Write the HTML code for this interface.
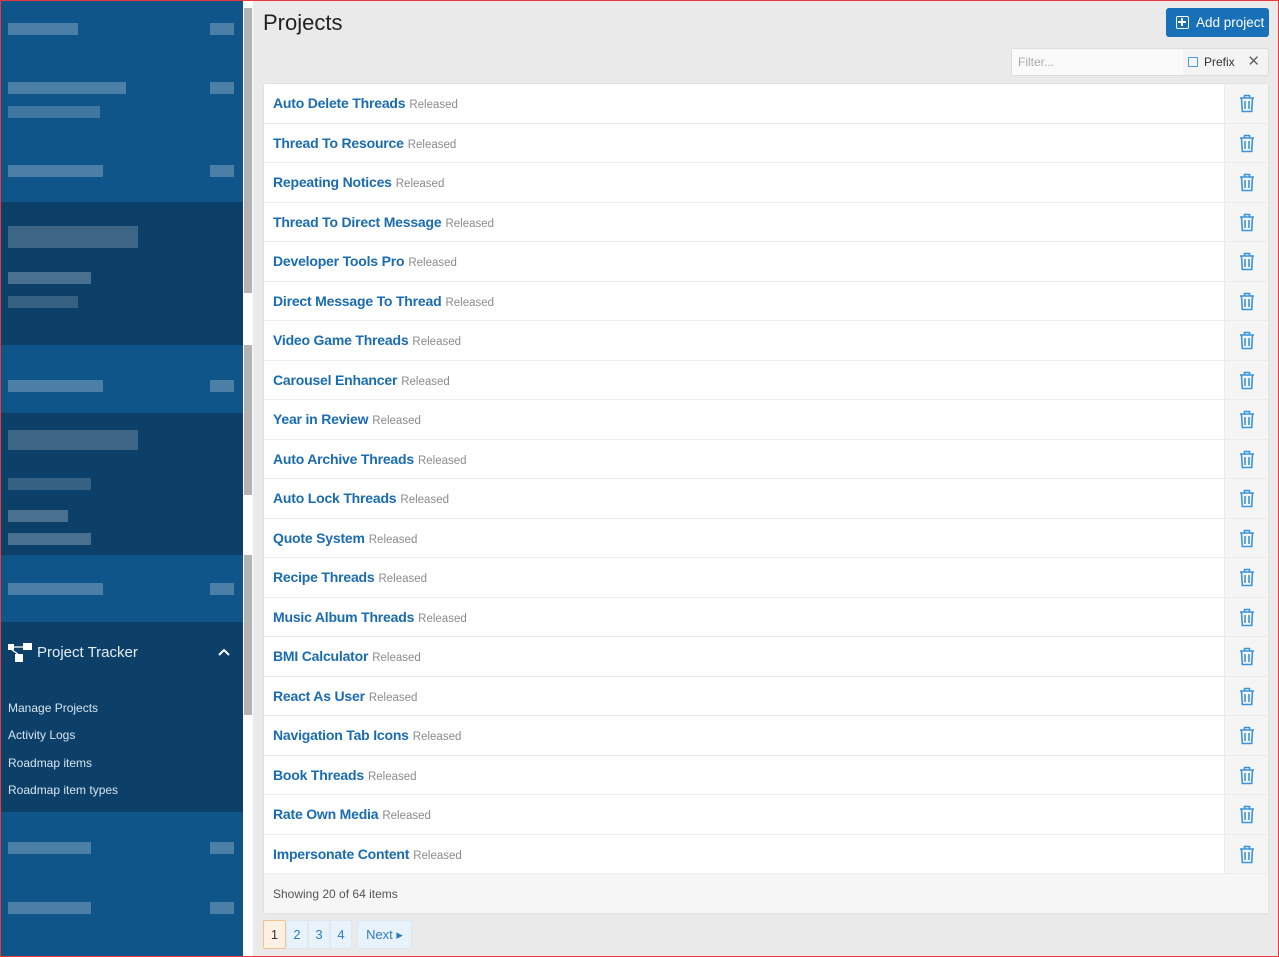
<!DOCTYPE html>
<html><head><meta charset="utf-8"><style>
*{box-sizing:border-box;margin:0;padding:0}
body{width:1279px;height:957px;overflow:hidden;background:#eaeaea;font-family:"Liberation Sans",sans-serif;position:relative}
.frame{position:absolute;inset:0;border:1px solid #e8383d;pointer-events:none;z-index:9}
.sb{position:absolute;left:0;top:0;width:243px;height:957px;background:#0f5589}
.sec{position:absolute;left:0;width:243px}
.dk{background:#0d4068}
.lt{background:#0f5589}
.px{position:absolute;height:12px;background:rgba(255,255,255,.25)}
.scroll{position:absolute;left:243px;top:0;width:10px;height:957px;background:#fdfdfd}
.th{position:absolute;left:1px;width:8px;background:#b3b3b3}
.nav{position:absolute;left:8px;color:#d6e4f0;font-size:12px}
h1{position:absolute;left:263px;top:10px;font-weight:normal;font-size:22px;color:#222}
.add{position:absolute;left:1166px;top:8px;width:103px;height:29px;background:#1770b8;border-radius:3px;color:#fff;font-size:13.5px;line-height:29px;padding-left:30px}
.add i{position:absolute;left:10px;top:8px;width:13px;height:13px;border:1.5px solid #fff;border-radius:2px}
.add i:before{content:"";position:absolute;left:4px;top:1px;width:1.5px;height:8px;background:#fff}
.add i:after{content:"";position:absolute;left:1px;top:4px;width:8px;height:1.5px;background:#fff}
.filter{position:absolute;left:1011px;top:48px;width:258px;height:28px;border:1px solid #ddd;border-radius:3px;background:#f4f4f4}
.filter .in{position:absolute;left:0;top:0;width:171px;height:26px;background:#fafafa;color:#aaa;font-size:12px;line-height:26px;padding-left:6px}
.filter .pf{position:absolute;left:176px;top:0;font-size:12px;line-height:26px;color:#333}
.filter .pf b{display:inline-block;width:10px;height:10px;border:1.5px solid #4a9de0;margin-right:6px;vertical-align:-1px}
.filter .x{position:absolute;right:8px;top:0;line-height:26px;color:#666;font-size:15px}
.list{position:absolute;left:263px;top:83px;width:1006px;background:#fff;border:1px solid #e2e2e2;border-radius:3px}
.row{height:39.5px;border-bottom:1px solid #ececec;position:relative}
.row .n{position:absolute;left:9px;top:11px;font-size:14px;font-weight:bold;color:#1a6cb0;letter-spacing:-.2px;white-space:nowrap}
.row .n span{font-weight:normal;font-size:11.5px;color:#8b8b8b;letter-spacing:0;margin-left:4px}
.row .t{position:absolute;right:0;top:0;width:44px;height:100%;background:#f5f5f5;border-left:1px solid #ececec}
.row svg{position:absolute;left:14px;top:10px}
.foot{height:39px;background:#f6f6f6;font-size:12px;color:#555;padding:13px 9px}
.pg{position:absolute;top:920px;height:29px;border:1px solid #dfe8f0;background:#e8f2fb;color:#2f7cc0;font-size:13px;line-height:27px;text-align:center;border-radius:2px}
</style></head><body>
<div class="sb">
<div class="sec lt" style="top:0;height:202px"></div>
<div class="sec dk" style="top:202px;height:143px"></div>
<div class="sec lt" style="top:345px;height:68px"></div>
<div class="sec dk" style="top:413px;height:142px"></div>
<div class="sec lt" style="top:555px;height:67px"></div>
<div class="sec dk" style="top:622px;height:190px"></div>
<div class="sec lt" style="top:812px;height:145px"></div>
<div class="px" style="left:8px;top:23px;width:70px"></div><div class="px" style="left:210px;top:23px;width:24px"></div>
<div class="px" style="left:8px;top:82px;width:118px"></div><div class="px" style="left:8px;top:106px;width:92px;opacity:.8"></div><div class="px" style="left:210px;top:82px;width:24px"></div>
<div class="px" style="left:8px;top:165px;width:95px"></div><div class="px" style="left:210px;top:165px;width:24px"></div>
<div class="px" style="left:8px;top:226px;width:130px;height:22px;opacity:.8"></div>
<div class="px" style="left:8px;top:272px;width:83px"></div><div class="px" style="left:8px;top:296px;width:70px;opacity:.7"></div>
<div class="px" style="left:8px;top:380px;width:95px"></div><div class="px" style="left:210px;top:380px;width:24px"></div>
<div class="px" style="left:8px;top:430px;width:130px;height:20px;opacity:.8"></div><div class="px" style="left:8px;top:478px;width:83px;opacity:.7"></div><div class="px" style="left:8px;top:510px;width:60px"></div><div class="px" style="left:8px;top:533px;width:83px"></div>
<div class="px" style="left:8px;top:583px;width:95px"></div><div class="px" style="left:210px;top:583px;width:24px"></div>
<div class="px" style="left:8px;top:842px;width:83px"></div><div class="px" style="left:210px;top:842px;width:24px"></div>
<div class="px" style="left:8px;top:902px;width:83px"></div><div class="px" style="left:210px;top:902px;width:24px"></div>
<svg style="position:absolute;left:8px;top:643px" width="25" height="20"><rect x="0" y="1" width="6" height="6" fill="#fff"/><rect x="15" y="0" width="9" height="7" fill="#fff"/><rect x="7" y="11" width="8" height="8" fill="#fff"/><path d="M6 4H15M4 7L10 11" stroke="#fff" stroke-width="1.3"/></svg>
<div style="position:absolute;left:37px;top:644px;color:#e3edf5;font-size:15px">Project Tracker</div>
<svg style="position:absolute;left:218px;top:648px" width="12" height="9"><path d="M1 7L6 2L11 7" stroke="#fff" stroke-width="2" fill="none"/></svg>
<div class="nav" style="top:701px">Manage Projects</div>
<div class="nav" style="top:728px">Activity Logs</div>
<div class="nav" style="top:756px">Roadmap items</div>
<div class="nav" style="top:783px">Roadmap item types</div>
</div>
<div class="scroll"><div class="th" style="top:8px;height:285px"></div><div class="th" style="top:345px;height:150px"></div><div class="th" style="top:555px;height:160px"></div></div>
<h1>Projects</h1>
<div class="add"><i></i>Add project</div>
<div class="filter"><div class="in">Filter...</div><div class="pf"><b></b>Prefix</div><div class="x">✕</div></div>
<div class="list">
<div class="row"><div class="n">Auto Delete Threads<span>Released</span></div><div class="t"><svg width="16" height="19" viewBox="0 0 16 19" fill="none" stroke="#3a93dd" stroke-width="1.6"><path d="M1 4H15M5.5 4V1.5H10.5V4M2.5 4L3.3 17.5H12.7L13.5 4M6 7V15M10 7V15"/></svg></div></div>
<div class="row"><div class="n">Thread To Resource<span>Released</span></div><div class="t"><svg width="16" height="19" viewBox="0 0 16 19" fill="none" stroke="#3a93dd" stroke-width="1.6"><path d="M1 4H15M5.5 4V1.5H10.5V4M2.5 4L3.3 17.5H12.7L13.5 4M6 7V15M10 7V15"/></svg></div></div>
<div class="row"><div class="n">Repeating Notices<span>Released</span></div><div class="t"><svg width="16" height="19" viewBox="0 0 16 19" fill="none" stroke="#3a93dd" stroke-width="1.6"><path d="M1 4H15M5.5 4V1.5H10.5V4M2.5 4L3.3 17.5H12.7L13.5 4M6 7V15M10 7V15"/></svg></div></div>
<div class="row"><div class="n">Thread To Direct Message<span>Released</span></div><div class="t"><svg width="16" height="19" viewBox="0 0 16 19" fill="none" stroke="#3a93dd" stroke-width="1.6"><path d="M1 4H15M5.5 4V1.5H10.5V4M2.5 4L3.3 17.5H12.7L13.5 4M6 7V15M10 7V15"/></svg></div></div>
<div class="row"><div class="n">Developer Tools Pro<span>Released</span></div><div class="t"><svg width="16" height="19" viewBox="0 0 16 19" fill="none" stroke="#3a93dd" stroke-width="1.6"><path d="M1 4H15M5.5 4V1.5H10.5V4M2.5 4L3.3 17.5H12.7L13.5 4M6 7V15M10 7V15"/></svg></div></div>
<div class="row"><div class="n">Direct Message To Thread<span>Released</span></div><div class="t"><svg width="16" height="19" viewBox="0 0 16 19" fill="none" stroke="#3a93dd" stroke-width="1.6"><path d="M1 4H15M5.5 4V1.5H10.5V4M2.5 4L3.3 17.5H12.7L13.5 4M6 7V15M10 7V15"/></svg></div></div>
<div class="row"><div class="n">Video Game Threads<span>Released</span></div><div class="t"><svg width="16" height="19" viewBox="0 0 16 19" fill="none" stroke="#3a93dd" stroke-width="1.6"><path d="M1 4H15M5.5 4V1.5H10.5V4M2.5 4L3.3 17.5H12.7L13.5 4M6 7V15M10 7V15"/></svg></div></div>
<div class="row"><div class="n">Carousel Enhancer<span>Released</span></div><div class="t"><svg width="16" height="19" viewBox="0 0 16 19" fill="none" stroke="#3a93dd" stroke-width="1.6"><path d="M1 4H15M5.5 4V1.5H10.5V4M2.5 4L3.3 17.5H12.7L13.5 4M6 7V15M10 7V15"/></svg></div></div>
<div class="row"><div class="n">Year in Review<span>Released</span></div><div class="t"><svg width="16" height="19" viewBox="0 0 16 19" fill="none" stroke="#3a93dd" stroke-width="1.6"><path d="M1 4H15M5.5 4V1.5H10.5V4M2.5 4L3.3 17.5H12.7L13.5 4M6 7V15M10 7V15"/></svg></div></div>
<div class="row"><div class="n">Auto Archive Threads<span>Released</span></div><div class="t"><svg width="16" height="19" viewBox="0 0 16 19" fill="none" stroke="#3a93dd" stroke-width="1.6"><path d="M1 4H15M5.5 4V1.5H10.5V4M2.5 4L3.3 17.5H12.7L13.5 4M6 7V15M10 7V15"/></svg></div></div>
<div class="row"><div class="n">Auto Lock Threads<span>Released</span></div><div class="t"><svg width="16" height="19" viewBox="0 0 16 19" fill="none" stroke="#3a93dd" stroke-width="1.6"><path d="M1 4H15M5.5 4V1.5H10.5V4M2.5 4L3.3 17.5H12.7L13.5 4M6 7V15M10 7V15"/></svg></div></div>
<div class="row"><div class="n">Quote System<span>Released</span></div><div class="t"><svg width="16" height="19" viewBox="0 0 16 19" fill="none" stroke="#3a93dd" stroke-width="1.6"><path d="M1 4H15M5.5 4V1.5H10.5V4M2.5 4L3.3 17.5H12.7L13.5 4M6 7V15M10 7V15"/></svg></div></div>
<div class="row"><div class="n">Recipe Threads<span>Released</span></div><div class="t"><svg width="16" height="19" viewBox="0 0 16 19" fill="none" stroke="#3a93dd" stroke-width="1.6"><path d="M1 4H15M5.5 4V1.5H10.5V4M2.5 4L3.3 17.5H12.7L13.5 4M6 7V15M10 7V15"/></svg></div></div>
<div class="row"><div class="n">Music Album Threads<span>Released</span></div><div class="t"><svg width="16" height="19" viewBox="0 0 16 19" fill="none" stroke="#3a93dd" stroke-width="1.6"><path d="M1 4H15M5.5 4V1.5H10.5V4M2.5 4L3.3 17.5H12.7L13.5 4M6 7V15M10 7V15"/></svg></div></div>
<div class="row"><div class="n">BMI Calculator<span>Released</span></div><div class="t"><svg width="16" height="19" viewBox="0 0 16 19" fill="none" stroke="#3a93dd" stroke-width="1.6"><path d="M1 4H15M5.5 4V1.5H10.5V4M2.5 4L3.3 17.5H12.7L13.5 4M6 7V15M10 7V15"/></svg></div></div>
<div class="row"><div class="n">React As User<span>Released</span></div><div class="t"><svg width="16" height="19" viewBox="0 0 16 19" fill="none" stroke="#3a93dd" stroke-width="1.6"><path d="M1 4H15M5.5 4V1.5H10.5V4M2.5 4L3.3 17.5H12.7L13.5 4M6 7V15M10 7V15"/></svg></div></div>
<div class="row"><div class="n">Navigation Tab Icons<span>Released</span></div><div class="t"><svg width="16" height="19" viewBox="0 0 16 19" fill="none" stroke="#3a93dd" stroke-width="1.6"><path d="M1 4H15M5.5 4V1.5H10.5V4M2.5 4L3.3 17.5H12.7L13.5 4M6 7V15M10 7V15"/></svg></div></div>
<div class="row"><div class="n">Book Threads<span>Released</span></div><div class="t"><svg width="16" height="19" viewBox="0 0 16 19" fill="none" stroke="#3a93dd" stroke-width="1.6"><path d="M1 4H15M5.5 4V1.5H10.5V4M2.5 4L3.3 17.5H12.7L13.5 4M6 7V15M10 7V15"/></svg></div></div>
<div class="row"><div class="n">Rate Own Media<span>Released</span></div><div class="t"><svg width="16" height="19" viewBox="0 0 16 19" fill="none" stroke="#3a93dd" stroke-width="1.6"><path d="M1 4H15M5.5 4V1.5H10.5V4M2.5 4L3.3 17.5H12.7L13.5 4M6 7V15M10 7V15"/></svg></div></div>
<div class="row"><div class="n">Impersonate Content<span>Released</span></div><div class="t"><svg width="16" height="19" viewBox="0 0 16 19" fill="none" stroke="#3a93dd" stroke-width="1.6"><path d="M1 4H15M5.5 4V1.5H10.5V4M2.5 4L3.3 17.5H12.7L13.5 4M6 7V15M10 7V15"/></svg></div></div>
<div class="foot">Showing 20 of 64 items</div>
</div>
<div class="pg" style="left:263px;width:23px;background:#fdf1e3;border-color:#f0c48a;color:#333">1</div>
<div class="pg" style="left:286px;width:22px">2</div>
<div class="pg" style="left:308px;width:22px">3</div>
<div class="pg" style="left:330px;width:22px">4</div>
<div class="pg" style="left:357px;width:55px">Next ▸</div>
<div class="frame"></div>
</body></html>
